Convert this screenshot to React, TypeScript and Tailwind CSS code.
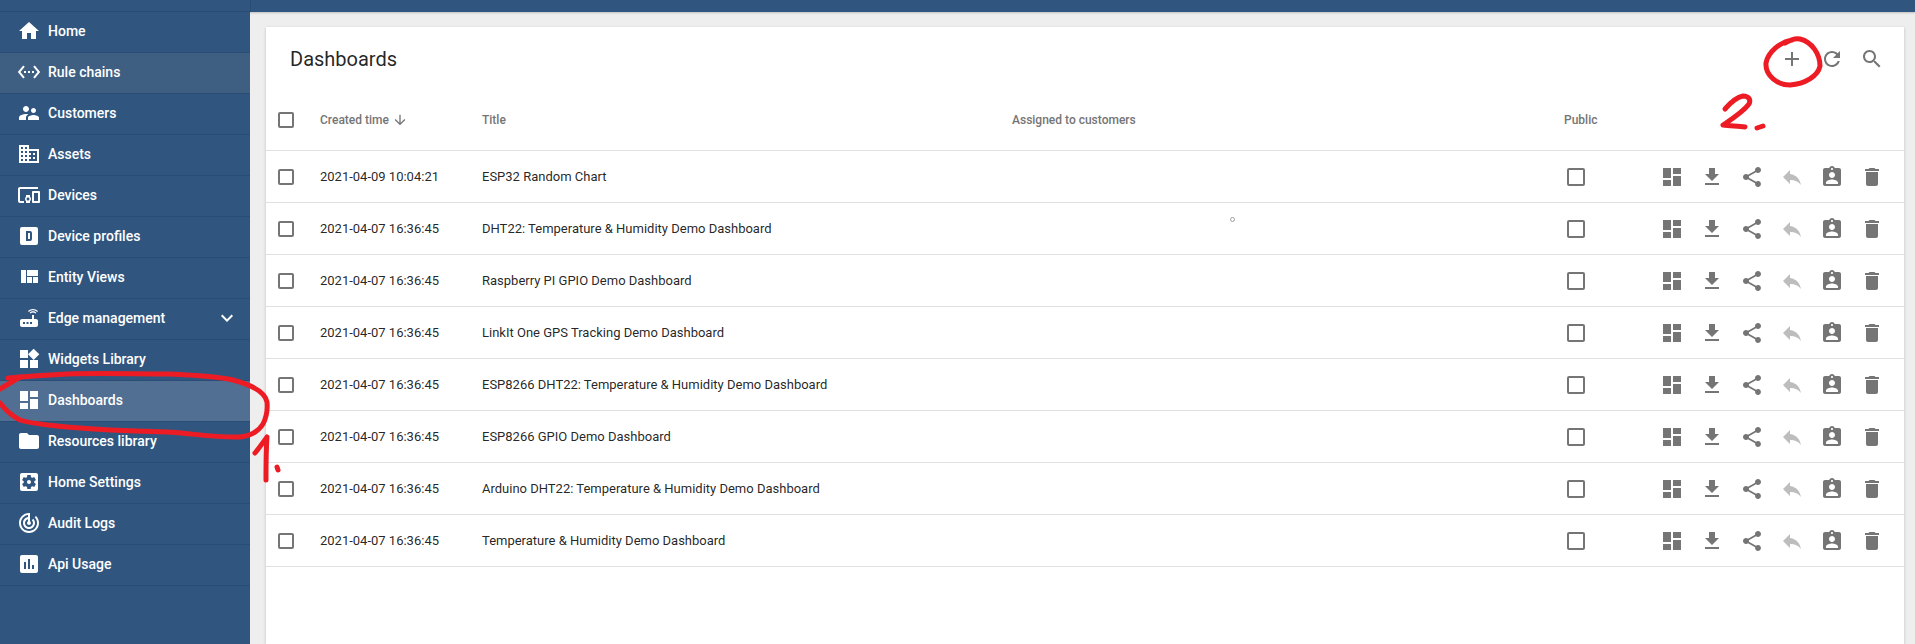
const sidebarIcons = {
  home: "M10 20v-6h4v6h5v-8h3L12 3 2 12h3v8z",
  rule: "M7.77 6.76L6.23 5.48.82 12l5.41 6.52 1.54-1.28L3.42 12l4.35-5.24zM7 13h2v-2H7v2zm10-2h-2v2h2v-2zm-6 2h2v-2h-2v2zm6.77-7.52l-1.54 1.28L20.58 12l-4.35 5.24 1.54 1.28L23.18 12l-5.41-6.52z",
  customers: "M16.5 12c1.38 0 2.49-1.12 2.49-2.5S17.88 7 16.5 7C15.12 7 14 8.12 14 9.5s1.12 2.5 2.5 2.5zM9 11c1.66 0 3-1.34 3-3s-1.34-3-3-3-3 1.34-3 3 1.34 3 3 3zm7.5 3c-1.83 0-5.5.92-5.5 2.75V19h11v-2.25c0-1.83-3.67-2.75-5.5-2.75zM9 13c-2.33 0-7 1.17-7 3.5V19h7v-2.25c0-.85.33-2.34 2.37-3.47C10.5 13.1 9.66 13 9 13z",
  assets: "M12 7V3H2v18h20V7H12zM6 19H4v-2h2v2zm0-4H4v-2h2v2zm0-4H4V9h2v2zm0-4H4V5h2v2zm4 12H8v-2h2v2zm0-4H8v-2h2v2zm0-4H8V9h2v2zm0-4H8V5h2v2zm10 12h-8v-2h2v-2h-2v-2h2v-2h-2V9h8v10zm-2-8h-2v2h2v-2zm0 4h-2v2h2v-2z",
  devices: "M3 6h18V4H3c-1.1 0-2 .9-2 2v12c0 1.1.9 2 2 2h4v-2H3V6zm10 6H9v1.78c-.61.55-1 1.33-1 2.22s.39 1.67 1 2.22V20h4v-1.78c.61-.55 1-1.34 1-2.22s-.39-1.67-1-2.22V12zm-2 5.5c-.83 0-1.5-.67-1.5-1.5s.67-1.5 1.5-1.5 1.5.67 1.5 1.5-.67 1.5-1.5 1.5zM22 8h-6c-.5 0-1 .5-1 1v10c0 .5.5 1 1 1h6c.5 0 1-.5 1-1V9c0-.5-.5-1-1-1zm-1 10h-4v-8h4v8z",
  profiles: "M9 7v10h4a2 2 0 0 0 2-2V9a2 2 0 0 0-2-2H9zm2 2h2v6h-2V9zM5 3h14a2 2 0 0 1 2 2v14a2 2 0 0 1-2 2H5a2 2 0 0 1-2-2V5a2 2 0 0 1 2-2z",
  views: "M10 18h5v-6h-5v6zm-6 0h5V5H4v13zm12 0h5v-6h-5v6zM10 5v6h11V5H10z",
  edge: "M20.2 5.9l.8-.8C19.6 3.7 17.8 3 16 3s-3.6.7-5 2.1l.8.8C13 4.8 14.5 4.2 16 4.2s3 .6 4.2 1.7zm-.9.8c-.9-.9-2.1-1.4-3.3-1.4s-2.4.5-3.3 1.4l.8.8c.7-.7 1.6-1 2.5-1 .9 0 1.8.3 2.5 1l.8-.8zM19 13h-2V9h-2v4H5c-1.1 0-2 .9-2 2v4c0 1.1.9 2 2 2h14c1.1 0 2-.9 2-2v-4c0-1.1-.9-2-2-2zM8 18H6v-2h2v2zm3.5 0h-2v-2h2v2zm3.5 0h-2v-2h2v2z",
  widgets: "M13 13v8h8v-8h-8zM3 21h8v-8H3v8zM3 3v8h8V3H3zm13.66-1.31L11 7.34 16.66 13l5.66-5.66-5.66-5.65z",
  dashboard: "M3 13h8V3H3v10zm0 8h8v-6H3v6zm10 0h8V11h-8v10zm0-18v6h8V3h-8z",
  folder: "M10 4H4c-1.1 0-1.99.9-1.99 2L2 18c0 1.1.9 2 2 2h16c1.1 0 2-.9 2-2V8c0-1.1-.9-2-2-2h-8l-2-2z",
  settings: "M12 10c-1.1 0-2 .9-2 2s.9 2 2 2 2-.9 2-2-.9-2-2-2zm7-7H5c-1.11 0-2 .9-2 2v14c0 1.1.89 2 2 2h14c1.11 0 2-.9 2-2V5c0-1.1-.89-2-2-2zm-1.75 9c0 .23-.02.46-.05.68l1.48 1.16c.13.11.17.3.08.45l-1.4 2.42c-.09.15-.27.21-.43.15l-1.74-.7c-.36.28-.76.51-1.18.69l-.26 1.85c-.03.17-.18.3-.35.3h-2.8c-.17 0-.32-.13-.35-.29l-.26-1.85c-.43-.18-.82-.41-1.18-.69l-1.74.7c-.16.06-.34 0-.43-.15l-1.4-2.42c-.09-.15-.05-.34.08-.45l1.48-1.16c-.03-.23-.05-.46-.05-.69 0-.23.02-.46.05-.68l-1.48-1.16c-.13-.11-.17-.3-.08-.45l1.4-2.42c.09-.15.27-.21.43-.15l1.74.7c.36-.28.76-.51 1.18-.69l.26-1.85c.03-.17.18-.3.35-.3h2.8c.17 0 .32.13.35.29l.26 1.85c.43.18.82.41 1.18.69l1.74-.7c.16-.06.34 0 .43.15l1.4 2.42c.09.15.05.34-.08.45l-1.48 1.16c.03.23.05.46.05.69z",
  audit: "M19.07 4.93l-1.41 1.41C19.1 7.79 20 9.79 20 12c0 4.42-3.58 8-8 8s-8-3.58-8-8c0-4.08 3.05-7.44 7-7.93v2.02C8.16 6.57 6 9.03 6 12c0 3.31 2.69 6 6 6s6-2.69 6-6c0-1.66-.67-3.16-1.76-4.24l-1.41 1.41C15.55 9.9 16 10.9 16 12c0 2.21-1.79 4-4 4s-4-1.79-4-4c0-1.86 1.28-3.41 3-3.86v2.14c-.6.35-1 .98-1 1.72 0 1.1.9 2 2 2s2-.9 2-2c0-.74-.4-1.38-1-1.72V2h-1C6.48 2 2 6.48 2 12s4.48 10 10 10 10-4.48 10-10c0-2.76-1.12-5.26-2.93-7.07z",
  usage: "M19 3H5c-1.1 0-2 .9-2 2v14c0 1.1.9 2 2 2h14c1.1 0 2-.9 2-2V5c0-1.1-.9-2-2-2zM9 17H7v-7h2v7zm4 0h-2V7h2v10zm4 0h-2v-4h2v4z",
};

const actionIcons = [
  { d: sidebarIcons.dashboard, className: "text-[#757575]" },
  { d: "M19 9h-4V3H9v6H5l7 7 7-7zM5 18v2h14v-2H5z", className: "text-[#757575]" },
  { d: "M18 16.08c-.76 0-1.44.3-1.96.77L8.91 12.7c.05-.23.09-.46.09-.7s-.04-.47-.09-.7l7.05-4.11c.54.5 1.25.81 2.04.81 1.66 0 3-1.34 3-3s-1.34-3-3-3-3 1.34-3 3c0 .24.04.47.09.7L8.04 9.81C7.5 9.31 6.79 9 6 9c-1.66 0-3 1.34-3 3s1.34 3 3 3c.79 0 1.5-.31 2.04-.81l7.12 4.16c-.05.21-.08.43-.08.65 0 1.61 1.31 2.92 2.92 2.92 1.61 0 2.92-1.31 2.92-2.92s-1.31-2.92-2.92-2.92z", className: "text-[#757575]" },
  { d: "M10 9V5l-7 7 7 7v-4.1c5 0 8.5 1.6 11 5.1-1-5-4-10-11-11z", className: "text-[#bdbdbd]" },
  { d: "M19 3h-4.18C14.4 1.84 13.3 1 12 1c-1.3 0-2.4.84-2.82 2H5c-1.1 0-2 .9-2 2v14c0 1.1.9 2 2 2h14c1.1 0 2-.9 2-2V5c0-1.1-.9-2-2-2zm-7 0c.55 0 1 .45 1 1s-.45 1-1 1-1-.45-1-1 .45-1 1-1zm0 4c1.66 0 3 1.34 3 3s-1.34 3-3 3-3-1.34-3-3 1.34-3 3-3zm6 12H6v-1.4c0-2 4-3.1 6-3.1s6 1.1 6 3.1V19z", className: "text-[#757575]" },
  { d: "M6 19c0 1.1.9 2 2 2h8c1.1 0 2-.9 2-2V7H6v12zM19 4h-3.5l-1-1h-5l-1 1H5v2h14V4z", className: "text-[#757575]" },
];

const menu = [
  { label: "Home", icon: sidebarIcons.home },
  { label: "Rule chains", icon: sidebarIcons.rule, bg: "bg-[#3f5f82]" },
  { label: "Customers", icon: sidebarIcons.customers },
  { label: "Assets", icon: sidebarIcons.assets },
  { label: "Devices", icon: sidebarIcons.devices },
  { label: "Device profiles", icon: sidebarIcons.profiles, evenOdd: true },
  { label: "Entity Views", icon: sidebarIcons.views },
  { label: "Edge management", icon: sidebarIcons.edge, chevron: true },
  { label: "Widgets Library", icon: sidebarIcons.widgets },
  { label: "Dashboards", icon: sidebarIcons.dashboard, bg: "bg-[#506f92]" },
  { label: "Resources library", icon: sidebarIcons.folder },
  { label: "Home Settings", icon: sidebarIcons.settings },
  { label: "Audit Logs", icon: sidebarIcons.audit },
  { label: "Api Usage", icon: sidebarIcons.usage },
];

const rows = [
  ["2021-04-09 10:04:21", "ESP32 Random Chart"],
  ["2021-04-07 16:36:45", "DHT22: Temperature & Humidity Demo Dashboard"],
  ["2021-04-07 16:36:45", "Raspberry PI GPIO Demo Dashboard"],
  ["2021-04-07 16:36:45", "LinkIt One GPS Tracking Demo Dashboard"],
  ["2021-04-07 16:36:45", "ESP8266 DHT22: Temperature & Humidity Demo Dashboard"],
  ["2021-04-07 16:36:45", "ESP8266 GPIO Demo Dashboard"],
  ["2021-04-07 16:36:45", "Arduino DHT22: Temperature & Humidity Demo Dashboard"],
  ["2021-04-07 16:36:45", "Temperature & Humidity Demo Dashboard"],
];

function Icon({ d, className, evenOdd }: { d: string; className?: string; evenOdd?: boolean }) {
  return (
    <svg viewBox="0 0 24 24" fill="currentColor" className={className}>
      <path d={d} fillRule={evenOdd ? "evenodd" : "nonzero"} />
    </svg>
  );
}

function Checkbox() {
  return <span className="block h-4 w-4 rounded-[2px] border-2 border-[#757575]" />;
}

export default function App() {
  return (
    <div className="relative h-[644px] overflow-hidden bg-[#eeeeee] font-['Roboto',sans-serif]">
      <div className="flex h-[12px] bg-[#305680] shadow-[0_1px_2px_rgba(0,0,0,0.2)]">
        <div className="w-[251px] border-b border-r border-[#2a4d75]" />
      </div>
      <div className="flex h-[632px]">
        <aside className="w-[250px] shrink-0 bg-[#305680] text-white">
          {menu.map((item) => (
            <div
              key={item.label}
              className={`flex h-[41px] items-center border-b border-[#2a4d75] pb-[2px] pl-[17px] pr-[11px] ${item.bg ?? ""}`}
            >
              <Icon d={item.icon} evenOdd={item.evenOdd} className="h-6 w-6 shrink-0" />
              <span className="ml-[7px] text-[14px] font-medium leading-none">{item.label}</span>
              {item.chevron && (
                <Icon d="M16.59 8.59L12 13.17 7.41 8.59 6 10l6 6 6-6z" className="ml-auto h-6 w-6" />
              )}
            </div>
          ))}
        </aside>

        <main className="min-w-0 flex-1 pl-4 pr-[11px] pt-[15px]">
          <section className="h-full bg-white shadow-[0_1px_3px_rgba(0,0,0,0.2)]">
            <header className="flex h-[64px] items-center pl-6 pr-5 text-[#757575]">
              <h1 className="text-[20px] font-normal leading-none text-[rgba(0,0,0,0.87)]">Dashboards</h1>
              <div className="ml-auto flex gap-4">
                <Icon d="M19 13h-6v6h-2v-6H5v-2h6V5h2v6h6v2z" className="h-6 w-6" />
                <Icon d="M17.65 6.35C16.2 4.9 14.21 4 12 4c-4.42 0-7.99 3.58-7.99 8s3.57 8 7.99 8c3.73 0 6.84-2.55 7.73-6h-2.08c-.82 2.33-3.04 4-5.65 4-3.31 0-6-2.69-6-6s2.69-6 6-6c1.66 0 3.14.69 4.22 1.78L13 11h7V4l-2.35 2.35z" className="h-6 w-6" />
                <Icon d="M15.5 14h-.79l-.28-.27C15.41 12.59 16 11.11 16 9.5 16 5.91 13.09 3 9.5 3S3 5.91 3 9.5 5.91 16 9.5 16c1.61 0 3.09-.59 4.23-1.57l.27.28v.79l5 4.99L20.49 19l-4.99-5zm-6 0C7.01 14 5 11.99 5 9.5S7.01 5 9.5 5 14 7.01 14 9.5 11.99 14 9.5 14z" className="h-6 w-6" />
              </div>
            </header>

            <div className="grid h-[60px] grid-cols-[54px_162px_530px_552px_1fr] items-center border-b border-[#e0e0e0] pb-[2px] text-[12px] font-medium text-[#757575]">
              <div className="pl-3">
                <Checkbox />
              </div>
              <div className="flex items-center gap-[3px]">
                Created time
                <Icon d="M20 12l-1.41-1.41L13 16.17V4h-2v12.17l-5.58-5.59L4 12l8 8 8-8z" className="h-4 w-4" />
              </div>
              <div>Title</div>
              <div>Assigned to customers</div>
              <div>Public</div>
            </div>

            {rows.map(([created, title], i) => (
              <div
                key={i}
                className="grid h-[52px] grid-cols-[54px_162px_1082px_1fr] items-center border-b border-[#e0e0e0] text-[13px] text-[rgba(0,0,0,0.87)]"
              >
                <div className="pl-3">
                  <Checkbox />
                </div>
                <div>{created}</div>
                <div>{title}</div>
                <div className="flex items-center pl-[3px]">
                  <span className="block h-[18px] w-[18px] rounded-[2px] border-2 border-[#757575]" />
                  <div className="ml-[75px] flex gap-4">
                    {actionIcons.map((a, j) => (
                      <Icon key={j} d={a.d} className={`h-6 w-6 ${a.className}`} />
                    ))}
                  </div>
                </div>
              </div>
            ))}
          </section>
        </main>
      </div>

      {/* red hand-drawn marks on top of the screenshot */}
      <svg className="pointer-events-none absolute inset-0 h-[644px] w-[1915px]" viewBox="0 0 1915 644" fill="none" stroke="#ed1c24" strokeWidth="5" strokeLinecap="round" strokeLinejoin="round">
        <path d="M8 378C30 376 45 375 67 374C100 373 135 374 167 374C190 375 215 376 233 380C252 385 265 392 267 402C268 412 265 420 263 424C258 432 250 436 240 437C215 438 190 433 167 432C130 431 100 430 67 427C50 425 32 424 20 420C10 415 4 408 0 403" />
        <path d="M0 389L20 377" />
        <path d="M255 453C260 447 264 441 267 437C266 450 266 466 266 480" />
        <path d="M277 467L278 470" />
        <path d="M1792 40C1780 42 1768 52 1766 63C1765 76 1778 85 1790 85C1805 84 1818 76 1820 66C1820 54 1812 42 1800 39C1796 38 1790 40 1785 43" />
        <path d="M1725 109C1731 102 1738 97 1743 96C1749 96 1751 100 1749 104C1743 112 1732 119 1723 125C1730 126 1738 126 1745 127" />
        <path d="M1757 128L1763 126" />
      </svg>
      <span className="absolute left-[1230px] top-[217px] h-[5px] w-[5px] rounded-full border border-[#9e9e9e]" />
    </div>
  );
}
